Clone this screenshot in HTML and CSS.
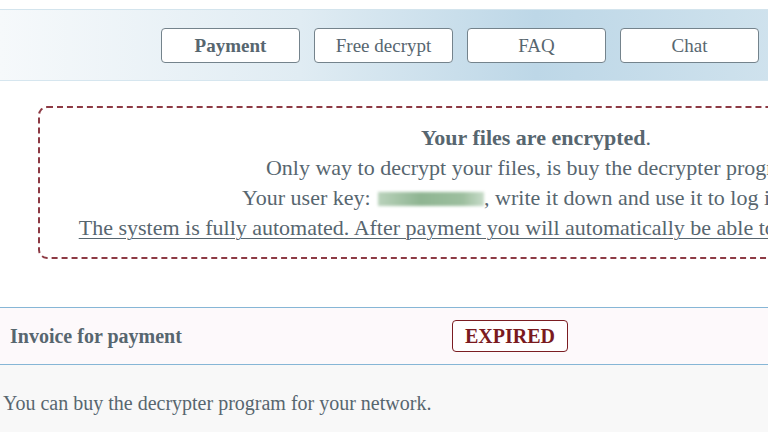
FILE: index.html
```html
<!DOCTYPE html>
<html>
<head>
<meta charset="utf-8">
<link rel="stylesheet" href="styles.css">
</head>
<body>
<div class="page">
  <header class="topbar">
    <nav class="nav">
      <a class="btn btn-active">Payment</a>
      <a class="btn">Free decrypt</a>
      <a class="btn">FAQ</a>
      <a class="btn">Chat</a>
    </nav>
  </header>
  <section class="notice">
    <p class="line title"><b>Your files are encrypted</b>.</p>
    <p class="line">Only way to decrypt your files, is buy the decrypter program.</p>
    <p class="line">Your user key: <span class="key"></span>, write it down and use it to log in here.</p>
    <p class="line link">The system is fully automated. After payment you will automatically be able to decrypt all of your files.</p>
  </section>
  <section class="invoice">
    <div class="invoice-bar">
      <span class="invoice-label">Invoice for payment</span>
      <span class="badge">EXPIRED</span>
    </div>
    <div class="invoice-body">
      <p class="desc">You can buy the decrypter program for your network.</p>
    </div>
  </section>
</div>
</body>
</html>
```

FILE: styles.css
```css
html, body {
  margin: 0;
  padding: 0;
  overflow: hidden;
  background: #ffffff;
}
body {
  width: 768px;
  height: 432px;
  font-family: "Liberation Serif", "Times New Roman", serif;
  color: #57666f;
}
.page {
  width: 1072px;
  padding-top: 9px;
}
.topbar {
  height: 70px;
  border-top: 1px solid #d3e4ed;
  border-bottom: 1px solid #d6e6ef;
  background: linear-gradient(to right, #f6f9fb 0%, #e0ecf3 28%, #bdd7e7 50%, #cfe2ed 72%, #eef5f9 100%);
}
.nav {
  display: flex;
  gap: 14px;
  padding-left: 161px;
  padding-top: 18px;
}
.btn {
  display: flex;
  align-items: center;
  justify-content: center;
  width: 139px;
  height: 35px;
  box-sizing: border-box;
  border: 1.5px solid #74838c;
  border-radius: 4px;
  background: #ffffff;
  font-size: 19px;
  color: #57666f;
}
.btn-active {
  font-weight: bold;
}
.notice {
  margin: 25px 0 0 38px;
  width: 996px;
  box-sizing: border-box;
  border: 2px dashed #8d3a44;
  border-radius: 9px;
  padding: 15px 0 14px;
  text-align: center;
}
.line {
  margin: 0;
  font-size: 22px;
  line-height: 30px;
}
.link {
  text-decoration: underline;
  text-decoration-thickness: 1px;
  text-underline-offset: 3px;
}
.key {
  display: inline-block;
  width: 106px;
  height: 14px;
  vertical-align: -1px;
  background: linear-gradient(to right, #b9d2bb, #8fb592 40%, #9dbf9f 80%, #c7dbc8);
  filter: blur(1.5px);
  margin-left: 2px;
}
.invoice {
  margin-top: 48px;
}
.invoice-bar {
  display: flex;
  align-items: center;
  height: 58px;
  box-sizing: border-box;
  border-top: 1.5px solid #86b6d6;
  border-bottom: 1.5px solid #86b6d6;
  background: #fdf9fb;
  padding-left: 10px;
}
.invoice-label {
  font-size: 20px;
  font-weight: bold;
  width: 442px;
}
.badge {
  display: flex;
  align-items: center;
  justify-content: center;
  width: 116px;
  height: 32px;
  box-sizing: border-box;
  border: 1.5px solid #7b1d22;
  border-radius: 4px;
  background: #ffffff;
  color: #7a1a1e;
  font-size: 20px;
  font-weight: bold;
}
.invoice-body {
  background: #f8f8f8;
  height: 80px;
  padding: 26px 0 0 3px;
}
.desc {
  margin: 0;
  font-size: 20px;
  line-height: 24px;
}
```
